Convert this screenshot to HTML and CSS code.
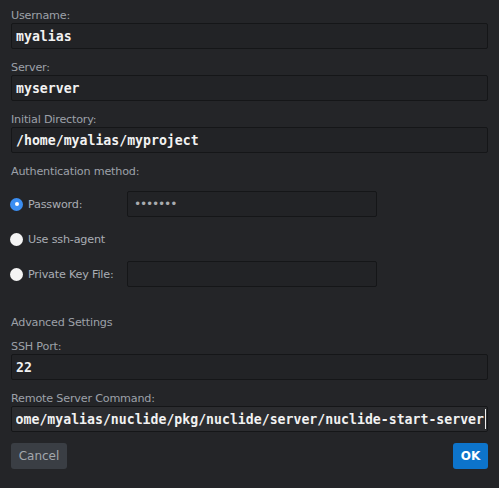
FILE: index.html
```html
<!DOCTYPE html>
<html>
<head>
<meta charset="utf-8">
<link rel="stylesheet" href="styles.css">
</head>
<body>
<div class="form">
  <div class="field">
    <div class="label">Username:</div>
    <div class="input"><span class="val">myalias</span></div>
  </div>
  <div class="field">
    <div class="label">Server:</div>
    <div class="input"><span class="val">myserver</span></div>
  </div>
  <div class="field">
    <div class="label">Initial Directory:</div>
    <div class="input"><span class="val">/home/myalias/myproject</span></div>
  </div>

  <div class="label">Authentication method:</div>
  <div class="radios">
    <div class="radio-row">
      <span class="radio checked"></span>
      <span class="radio-label">Password:</span>
      <div class="input small"><span class="dots">•••••••</span></div>
    </div>
    <div class="radio-row">
      <span class="radio"></span>
      <span class="radio-label">Use ssh-agent</span>
    </div>
    <div class="radio-row">
      <span class="radio"></span>
      <span class="radio-label">Private Key File:</span>
      <div class="input small"></div>
    </div>
  </div>

  <div class="section">Advanced Settings</div>
  <div class="field">
    <div class="label">SSH Port:</div>
    <div class="input"><span class="val">22</span></div>
  </div>
  <div class="field">
    <div class="label">Remote Server Command:</div>
    <div class="input focused">
      <div class="clip"><span class="val">/home/myalias/nuclide/pkg/nuclide/server/nuclide-start-server</span><span class="caret"></span></div>
    </div>
  </div>

  <div class="buttons">
    <button class="btn cancel">Cancel</button>
    <button class="btn ok">OK</button>
  </div>
</div>
</body>
</html>
```

FILE: styles.css
```css
html, body {
  margin: 0;
  padding: 0;
  background: #242528;
}
body {
  width: 499px;
  height: 488px;
  overflow: hidden;
  font-family: "DejaVu Sans", "Liberation Sans", sans-serif;
}
.form {
  width: 477px;
  padding: 8px 11px 0 11px;
}
.field {
  margin-bottom: 11px;
}
.label {
  font-size: 11.2px;
  line-height: 15px;
  color: #9da1a8;
  letter-spacing: -0.2px;
}
.input {
  box-sizing: border-box;
  width: 477px;
  height: 26px;
  border: 1px solid #151618;
  border-radius: 2px;
  background: #222326;
  display: flex;
  align-items: center;
  padding: 0 4px;
  overflow: hidden;
}
.val {
  font-family: "DejaVu Sans Mono", "Liberation Mono", monospace;
  font-weight: bold;
  font-size: 13.2px;
  color: #f2f2f2;
  white-space: nowrap;
}
.focused {
  background: #2b2c2f;
  padding: 0 1px 0 4px;
}
.clip {
  flex: 1;
  min-width: 0;
  display: flex;
  justify-content: flex-end;
  align-items: center;
  overflow: hidden;
}
.clip .val {
  flex-shrink: 0;
}
.caret {
  flex-shrink: 0;
  width: 1px;
  height: 20px;
  background: #f0f0f0;
  margin-left: 1px;
}
.radios {
  margin-top: 12px;
  display: flex;
  flex-direction: column;
  gap: 9px;
}
.radio-row {
  height: 26px;
  display: flex;
  align-items: center;
}
.radio {
  box-sizing: border-box;
  width: 13px;
  height: 13px;
  border-radius: 50%;
  background: #f4f4f4;
  margin-left: -1px;
  flex-shrink: 0;
  display: flex;
  align-items: center;
  justify-content: center;
}
.radio.checked {
  background: #3b8ef2;
}
.radio.checked::after {
  content: "";
  width: 4px;
  height: 4px;
  border-radius: 50%;
  background: #ffffff;
}
.radio-label {
  margin-left: 5px;
  font-size: 11.2px;
  color: #a9adb4;
  letter-spacing: -0.2px;
  width: 99px;
  white-space: nowrap;
}
.input.small {
  width: 250px;
  padding-left: 6px;
}
.dots {
  font-family: "DejaVu Sans Mono", monospace;
  font-size: 12px;
  color: #a9abaf;
  letter-spacing: -1.2px;
}
.section {
  margin-top: 28px;
  margin-bottom: 9px;
  font-size: 11.2px;
  line-height: 15px;
  color: #9da1a8;
  letter-spacing: -0.2px;
}
.buttons {
  display: flex;
  justify-content: space-between;
}
.btn {
  height: 26px;
  border: none;
  border-radius: 3px;
  font-family: "DejaVu Sans", sans-serif;
  font-size: 12px;
  padding: 0;
  cursor: default;
}
.cancel {
  width: 56px;
  background: #3a3e44;
  color: #a3a7ad;
}
.ok {
  width: 35px;
  background: #0d74cb;
  color: #ffffff;
  font-weight: bold;
}
```
